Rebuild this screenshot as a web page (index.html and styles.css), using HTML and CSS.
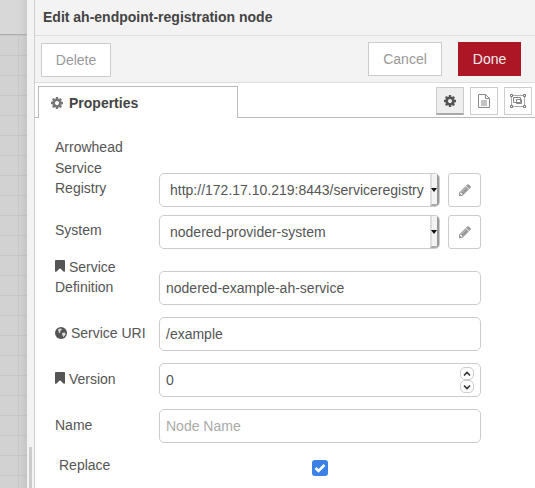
FILE: index.html
```html
<!DOCTYPE html>
<html>
	<head>
		<meta charset="UTF-8" />
		<title>Edit node</title>
		<link rel="stylesheet" href="styles.css">
	</head>

	<body>
		<div class="canvas">
			<div class="canvas-top"></div>
			<div class="canvas-grid"></div>
		</div>
		<div class="sidebar-strip">
			<div class="strip-thumb"></div>
		</div>

		<div class="tray">
			<div class="tray-title">Edit ah-endpoint-registration node</div>

			<div class="tray-toolbar">
				<button class="btn btn-delete">Delete</button>
				<button class="btn btn-cancel">Cancel</button>
				<button class="btn btn-done">Done</button>
			</div>

			<div class="tabs">
				<div class="tab">
					<svg class="icon-gear" viewBox="128 128 1536 1536"><use href="#gear"/></svg>
					Properties
				</div>
				<div class="tab-buttons">
					<div class="tab-btn active">
						<svg class="icon-gear dark" viewBox="128 128 1536 1536"><use href="#gear"/></svg>
					</div>
					<div class="tab-btn">
						<svg width="12" height="14" viewBox="0 0 12 14" fill="none" stroke="#888" stroke-width="1">
							<path d="M.5.5h7l4 4v9H.5zM7.500.5v4h4M3 7h6M3 9h6M3 11h6"/>
						</svg>
					</div>
					<div class="tab-btn">
						<svg width="16" height="14" viewBox="0 0 16 14" fill="none" stroke-width="1">
							<path stroke="#aaa" d="M1.500 1.500h13v11h-13z"/>
							<path stroke="#888" d="M3.500 3.500h7v5h-7zM6.500 5.500h5v4h-5z"/>
							<path stroke="#777" fill="#fff" d="M.5.5h2v2h-2zM13.500.5h2v2h-2zM.5 11.500h2v2h-2zM13.500 11.500h2v2h-2z"/>
						</svg>
					</div>
				</div>
			</div>

			<div class="form">
				<div class="row row-select">
					<label class="lbl lbl-narrow">Arrowhead Service Registry</label>
					<div class="select">
						<span class="select-value">http://172.17.10.219:8443/serviceregistry</span>
						<span class="select-arrow"></span>
					</div>
					<div class="edit-btn"><svg viewBox="0 0 1792 1792"><use href="#pencil"/></svg></div>
				</div>

				<div class="row row-select">
					<label class="lbl lbl-system">System</label>
					<div class="select">
						<span class="select-value">nodered-provider-system</span>
						<span class="select-arrow"></span>
					</div>
					<div class="edit-btn"><svg viewBox="0 0 1792 1792"><use href="#pencil"/></svg></div>
				</div>

				<div class="row">
					<label class="lbl"><svg class="icon-bookmark" viewBox="256 128 1280 1536"><use href="#bookmark"/></svg> Service Definition</label>
					<div class="input">nodered-example-ah-service</div>
				</div>

				<div class="row">
					<label class="lbl">
						<svg class="icon-globe" viewBox="0 0 12 12">
							<circle cx="6" cy="6" r="6" fill="#555"/>
							<path fill="#ddd" d="M3 2.500l2-1 2 .5-1 1.500-1 .5.500 1.500-1.500.5zM7 6l3-.5.500 2-2 2.500-1-1.500z"/>
						</svg>
						Service URI
					</label>
					<div class="input">/example</div>
				</div>

				<div class="row">
					<label class="lbl"><svg class="icon-bookmark" viewBox="256 128 1280 1536"><use href="#bookmark"/></svg> Version</label>
					<div class="input">
						0
						<div class="spinner">
							<span class="spin">
								<svg viewBox="0 0 8 6"><path d="M1 4.500l3-3 3 3" /></svg>
							</span>
							<span class="spin">
								<svg viewBox="0 0 8 6"><path d="M1 1.500l3 3 3-3" /></svg>
							</span>
						</div>
					</div>
				</div>

				<div class="row">
					<label class="lbl">Name</label>
					<div class="input placeholder">Node Name</div>
				</div>

				<div class="row-replace">
					<label class="lbl-replace">Replace</label>
					<span class="checkbox">
						<svg viewBox="0 0 16 16"><path d="M3.500 8l3 3 6-6"/></svg>
					</span>
				</div>
			</div>
		</div>

		<svg class="defs" width="0" height="0">
			<defs>
				<path id="gear" d="M1152 896q0-106-75-181t-181-75-181 75-75 181 75 181 181 75 181-75 75-181zm512-109v222q0 12-8 23t-20 13l-185 28q-19 54-39 91 35 50 107 138 10 12 10 25t-9 23q-27 37-99 108t-94 71q-12 0-26-9l-138-108q-44 23-91 38-16 136-29 186-7 28-36 28h-222q-14 0-24.500-8.500t-11.500-21.500l-28-184q-49-16-90-37l-141 107q-10 9-25 9-14 0-25-11-126-114-165-168-7-10-7-23 0-12 8-23 15-21 51-66.500t54-70.500q-27-50-41-99l-183-27q-13-2-21-12.500t-8-23.500v-222q0-12 8-23t19-13l186-28q14-46 39-92-40-57-107-138-10-12-10-24 0-10 9-23 26-36 98.500-107.500t94.500-71.500q13 0 26 10l138 107q44-23 91-38 16-136 29-186 7-28 36-28h222q14 0 24.500 8.500t11.500 21.500l28 184q49 16 90 37l142-107q9-9 24-9 13 0 25 10 129 119 165 170 7 8 7 22 0 12-8 23-15 21-51 66.500t-54 70.500q26 50 41 98l183 28q13 2 21 12.500t8 23.500z"/>
				<path id="pencil" d="M491 1536l91-91-235-235-91 91v107h128v128h107zm523-928q0-22-22-22-10 0-17 7l-542 542q-7 7-7 17 0 22 22 22 10 0 17-7l542-542q7-7 7-17zm-54-192l416 416-832 832h-416v-416zm683 96q0 53-37 90l-166 166-416-416 166-165q36-38 90-38 53 0 91 38l235 234q37 39 37 91z"/>
				<path id="bookmark" d="M1420 128q23 0 44 9 33 13 52.500 41t19.500 62v1289q0 34-19.500 62t-52.500 41q-19 8-44 8-48 0-83-32l-441-424-441 424q-36 33-83 33-23 0-44-9-33-13-52.500-41t-19.500-62v-1289q0-34 19.500-62t52.500-41q21-9 44-9h1048z"/>
			</defs>
		</svg>
	</body>
</html>
```

FILE: styles.css
```css
html, body {
	height: 100%;
	margin: 0;
	overflow: hidden;
}
body {
	background: #fff;
	color: #555;
	display: flex;
	font-family: "Liberation Sans", Arial, sans-serif;
	font-size: 14px;
}
.defs {
	position: absolute;
}

/* canvas behind the tray */
.canvas {
	display: flex;
	flex: 0 0 27px;
	flex-direction: column;
}
.canvas-top {
	background: linear-gradient(90deg, #d8d8d8 70%, #cbcbcb);
	border-bottom: 1px solid #aeaeae;
	height: 34px;
}
.canvas-grid {
	background-color: #d2d2d2;
	background-image:
		linear-gradient(90deg, transparent 70%, rgba(0, 0, 0, 0.06)),
		linear-gradient(#c6c6c6 1px, transparent 1px),
		linear-gradient(90deg, #c8c8c8 1px, transparent 1px);
	background-position: 0 0, 0 0, 18px 0;
	background-size: 100% 100%, 20px 20px, 20px 20px;
	flex: 1;
}
.sidebar-strip {
	background: #f3f3f3;
	border-right: 1px solid #cfcfcf;
	box-sizing: border-box;
	flex: 0 0 8px;
}
.strip-thumb {
	background: #ccc;
	height: 41px;
	margin-left: 2px;
	margin-top: 447px;
	width: 3px;
}

/* edit tray */
.tray {
	display: flex;
	flex: 1;
	flex-direction: column;
	min-width: 0;
}
.tray-title {
	background: #f3f3f3;
	border-bottom: 1px solid #ddd;
	color: #444;
	font-size: 14px;
	font-weight: bold;
	height: 35px;
	line-height: 34px;
	padding-left: 8px;
}
.tray-toolbar {
	background: #f3f3f3;
	border-bottom: 1px solid #ddd;
	display: flex;
	gap: 16px;
	height: 40px;
	padding: 6px 14px 0 6px;
}
.btn {
	box-sizing: border-box;
	font-family: inherit;
	font-size: 14px;
	height: 34px;
	padding: 0;
}
.btn-delete, .btn-cancel {
	background: #fff;
	border: 1px solid #ccc;
	color: #999;
}
.btn-delete {
	margin-right: auto;
	margin-top: 1px;
	width: 70px;
}
.btn-cancel {
	width: 74px;
}
.btn-done {
	background: #ad1625;
	border: none;
	color: #eee;
	width: 63px;
}

.tabs {
	align-items: flex-start;
	border-bottom: 1px solid #bbb;
	display: flex;
	height: 31px;
	justify-content: space-between;
	padding: 3px 3px 0;
}
.tab {
	align-items: center;
	background: #fff;
	border: 1px solid #bbb;
	border-bottom: none;
	box-sizing: border-box;
	color: #444;
	display: flex;
	font-weight: bold;
	gap: 6px;
	height: 32px;
	padding-left: 12px;
	position: relative;
	width: 200px;
}
.icon-gear {
	fill: #777;
	height: 12px;
	width: 12px;
}
.icon-gear.dark {
	fill: #555;
}
.tab-buttons {
	display: flex;
	gap: 6px;
	margin-top: 1px;
}
.tab-btn {
	align-items: center;
	background: #fff;
	border: 1px solid #ccc;
	box-sizing: border-box;
	display: flex;
	height: 28px;
	justify-content: center;
	width: 28px;
}
.tab-btn.active {
	background: #eee;
	border-bottom: 2px solid #aaa;
}

/* form rows */
.form {
	padding: 19px 54px 0 20px;
}
.row {
	align-items: flex-end;
	display: flex;
	margin-bottom: 12px;
}
.row-select {
	margin-bottom: 8px;
}
.lbl {
	color: #555;
	flex: 0 0 104px;
	line-height: 20px;
	margin-bottom: 8px;
}
.lbl-narrow {
	box-sizing: border-box;
	line-height: 20.5px;
	margin-bottom: 8.5px;
	padding-right: 20px;
}
.lbl-system {
	margin-bottom: 9px;
}
.select {
	border: 1px solid #ccc;
	border-radius: 5px;
	box-sizing: border-box;
	display: flex;
	flex: 0 0 281px;
	height: 34px;
	overflow: hidden;
}
.select-value {
	flex: 1;
	line-height: 32px;
	overflow: hidden;
	padding-left: 10px;
	white-space: nowrap;
}
.select-arrow {
	background: #f3f3f3;
	border-bottom: 2px solid #aaa;
	border-left: 2px solid #ddd;
	border-right: 2px solid #999;
	position: relative;
	width: 5px;
}
.select-arrow::after {
	border-left: 3px solid transparent;
	border-right: 3px solid transparent;
	border-top: 4px solid #111;
	content: "";
	left: -1px;
	position: absolute;
	top: 14px;
}
.edit-btn {
	align-items: center;
	border: 1px solid #ccc;
	border-radius: 3px;
	box-sizing: border-box;
	display: flex;
	height: 34px;
	justify-content: center;
	margin-left: 8px;
	width: 33px;
}
.edit-btn svg {
	fill: #999;
	height: 14px;
	width: 14px;
}
.input {
	border: 1px solid #ccc;
	border-radius: 5px;
	box-sizing: border-box;
	flex: 0 0 322px;
	height: 34px;
	line-height: 32px;
	padding-left: 6px;
	position: relative;
}
.placeholder {
	color: #aaa;
}
.spinner {
	display: flex;
	flex-direction: column;
	position: absolute;
	right: 6px;
	top: 3px;
}
.spin {
	align-items: center;
	border: 1px solid #ccc;
	border-radius: 5px;
	box-sizing: border-box;
	display: flex;
	height: 13px;
	justify-content: center;
	width: 14px;
}
.spin svg {
	fill: none;
	height: 6px;
	stroke: #333;
	stroke-width: 1.6;
	width: 8px;
}
.icon-bookmark {
	fill: #555;
	height: 12px;
	width: 10px;
}
.icon-globe {
	height: 12px;
	vertical-align: -1px;
	width: 12px;
}
.row-replace {
	display: flex;
}
.lbl-replace {
	box-sizing: border-box;
	flex: 0 0 257px;
	line-height: 20px;
	padding-left: 4px;
}
.checkbox {
	background: #3b82e6;
	border-radius: 3px;
	height: 16px;
	margin-top: 5px;
	width: 16px;
}
.checkbox svg {
	display: block;
	fill: none;
	stroke: #fff;
	stroke-width: 2.5;
}
```
